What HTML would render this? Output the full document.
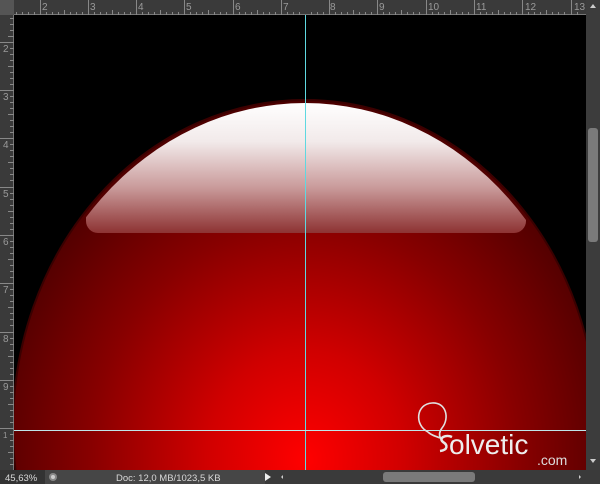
<!DOCTYPE html>
<html><head><meta charset="utf-8"><style>
html,body{margin:0;padding:0;background:#000;width:600px;height:484px;overflow:hidden;font-family:"Liberation Sans",sans-serif}
svg{display:block;position:absolute;left:0;top:0}
</style></head><body>
<svg width="600" height="484" viewBox="0 0 600 484" xmlns="http://www.w3.org/2000/svg">
<defs>
<radialGradient id="red" cx="305" cy="460" r="330" gradientUnits="userSpaceOnUse" gradientTransform="translate(305 460) scale(1 1.1) translate(-305 -460)">
<stop offset="0" stop-color="#ff0000"/>
<stop offset="0.3" stop-color="#d00000"/>
<stop offset="0.65" stop-color="#880000"/>
<stop offset="1" stop-color="#4a0000"/>
</radialGradient>
<linearGradient id="hl" x1="0" y1="102" x2="0" y2="234" gradientUnits="userSpaceOnUse">
<stop offset="0" stop-color="#ffffff"/>
<stop offset="0.3" stop-color="#f2eaea"/>
<stop offset="0.65" stop-color="#c99a9a"/>
<stop offset="1" stop-color="#8c3030"/>
</linearGradient>
<clipPath id="hc"><rect x="86" y="90" width="440" height="143" rx="12"/></clipPath>
<clipPath id="cv"><rect x="14" y="15" width="572" height="455"/></clipPath>
</defs>
<rect x="14" y="15" width="572" height="455" fill="#000"/>
<g clip-path="url(#cv)">
<ellipse cx="305" cy="427" rx="292" ry="327" fill="url(#red)"/>
<ellipse cx="305" cy="427" rx="292" ry="327" fill="none" stroke="#3a0000" stroke-width="2"/>
<ellipse cx="305" cy="429" rx="288" ry="326" fill="url(#hl)" clip-path="url(#hc)"/>
<line x1="305.5" y1="15" x2="305.5" y2="470" stroke="#5fd8e0" stroke-width="1"/>
<line x1="14" y1="430.5" x2="586" y2="430.5" stroke="#bfe6ea" stroke-width="1"/>
<path d="M428 432 C414 425 416 404 432 403 C446 402 450 418 442 428 C439 432 439 436 441 439" fill="none" stroke="#e0e0e0" stroke-width="1.6"/>
<path d="M428 432 C432 436 436 436 440 438" fill="none" stroke="#e0e0e0" stroke-width="1.6"/>
<path d="M452 437 C446 434 438 438 443 442 C448 445 448 450 440 451" fill="none" stroke="#e8e8e8" stroke-width="2.5"/>
<text x="449" y="454" font-size="28" fill="#eeeeee">olvetic</text>
<text x="537" y="465" font-size="14" fill="#dddddd">.com</text>
</g>
<rect x="0" y="0" width="586" height="15" fill="#3a3a3a"/>
<rect x="0" y="0" width="14" height="15" fill="#555"/>
<line x1="14" y1="14.5" x2="586" y2="14.5" stroke="#777"/>
<g fill="#9a9a9a" font-size="10">
<text x="42" y="10">2</text><text x="90" y="10">3</text><text x="138" y="10">4</text><text x="186" y="10">5</text><text x="235" y="10">6</text><text x="283" y="10">7</text><text x="330" y="10">8</text><text x="379" y="10">9</text><text x="428" y="10">10</text><text x="476" y="10">11</text><text x="525" y="10">12</text><text x="574" y="10">13</text>
</g>
<g stroke="#888" stroke-width="1">
<path d="M40.5 0V15M88.5 0V15M136.5 0V15M184.5 0V15M233.5 0V15M281.5 0V15M329.5 0V15M377.5 0V15M426.5 0V15M474.5 0V15M522.5 0V15M571.5 0V15"/>
<path d="M16.5 12V15M22.5 12V15M28.5 12V15M34.5 12V15M46.5 12V15M52.5 12V15M58.5 12V15M64.5 10V15M70.5 12V15M76.5 12V15M82.5 12V15M94.5 12V15M100.5 12V15M106.5 12V15M112.5 10V15M118.5 12V15M124.5 12V15M130.5 12V15M142.5 12V15M148.5 12V15M154.5 12V15M160.5 10V15M166.5 12V15M172.5 12V15M178.5 12V15M190.5 12V15M196.5 12V15M202.5 12V15M208.5 10V15M214.5 12V15M220.5 12V15M226.5 12V15M239.5 12V15M245.5 12V15M251.5 12V15M257.5 10V15M263.5 12V15M269.5 12V15M275.5 12V15M287.5 12V15M293.5 12V15M299.5 12V15M311.5 12V15M317.5 12V15M323.5 12V15M335.5 12V15M341.5 12V15M347.5 12V15M353.5 10V15M359.5 12V15M365.5 12V15M371.5 12V15M383.5 12V15M389.5 12V15M395.5 12V15M401.5 10V15M407.5 12V15M413.5 12V15M419.5 12V15M432.5 12V15M438.5 12V15M444.5 12V15M450.5 10V15M456.5 12V15M462.5 12V15M468.5 12V15M480.5 12V15M486.5 12V15M492.5 12V15M498.5 10V15M504.5 12V15M510.5 12V15M516.5 12V15M528.5 12V15M534.5 12V15M540.5 12V15M546.5 10V15M552.5 12V15M558.5 12V15M564.5 12V15M577.5 12V15"/>
</g>
<rect x="0" y="15" width="14" height="455" fill="#3a3a3a"/>
<line x1="13.5" y1="15" x2="13.5" y2="470" stroke="#777"/>
<g fill="#9a9a9a" font-size="10">
<text x="3" y="52">2</text><text x="3" y="100">3</text><text x="3" y="148">4</text><text x="3" y="197">5</text><text x="3" y="245">6</text><text x="3" y="293">7</text><text x="3" y="342">8</text><text x="3" y="390">9</text><text x="3" y="438" font-size="8">1</text>
</g>
<g stroke="#888">
<path d="M0 42.5H14M0 90.5H14M0 138.5H14M0 187.5H14M0 235.5H14M0 283.5H14M0 332.5H14M0 380.5H14M0 428.5H14"/>
<path d="M10 18.5H14M10 24.5H14M10 30.5H14M8 36.5H14M10 48.5H14M10 54.5H14M10 60.5H14M8 66.5H14M10 72.5H14M10 78.5H14M10 84.5H14M10 96.5H14M10 102.5H14M10 108.5H14M8 114.5H14M10 120.5H14M10 126.5H14M10 132.5H14M10 144.5H14M10 150.5H14M10 156.5H14M8 162.5H14M10 168.5H14M10 174.5H14M10 180.5H14M10 193.5H14M10 199.5H14M10 205.5H14M8 211.5H14M10 217.5H14M10 223.5H14M10 229.5H14M10 241.5H14M10 247.5H14M10 253.5H14M8 259.5H14M10 265.5H14M10 271.5H14M10 277.5H14M10 289.5H14M10 295.5H14M10 301.5H14M8 307.5H14M10 313.5H14M10 319.5H14M10 325.5H14M10 338.5H14M10 344.5H14M10 350.5H14M8 356.5H14M10 362.5H14M10 368.5H14M10 374.5H14M10 386.5H14M10 392.5H14M10 398.5H14M8 404.5H14M10 410.5H14M10 416.5H14M10 422.5H14M10 434.5H14M10 440.5H14M10 446.5H14M8 452.5H14M10 458.5H14M10 464.5H14"/>
</g>
<rect x="586" y="0" width="14" height="470" fill="#3c3c3c"/>
<path d="M590 8L593 4L596 8Z" fill="#ccc"/>
<path d="M590 459L593 463L596 459Z" fill="#ccc"/>
<rect x="588" y="128" width="10" height="114" rx="3" fill="#7a7a7a"/>
<rect x="0" y="470" width="600" height="14" fill="#3a3a3a"/>
<rect x="0" y="470" width="45" height="14" fill="#333"/>
<rect x="45" y="470" width="220" height="14" fill="#464646"/>
<text x="5" y="481" font-size="9.5" fill="#d8d8d8">45,63%</text>
<circle cx="53" cy="477" r="4" fill="#888"/><circle cx="53" cy="477" r="2" fill="#ccc"/>
<text x="116" y="481" font-size="9.5" fill="#d8d8d8">Doc: 12,0 MB/1023,5 KB</text>
<path d="M265 473L271 477L265 481Z" fill="#eee"/>
<path d="M283 475L281 477L283 479Z" fill="#ccc"/>
<rect x="383" y="472" width="92" height="10" rx="3" fill="#7a7a7a"/>
<path d="M579 475L581 477L579 479Z" fill="#ccc"/>
</svg>
</body></html>
